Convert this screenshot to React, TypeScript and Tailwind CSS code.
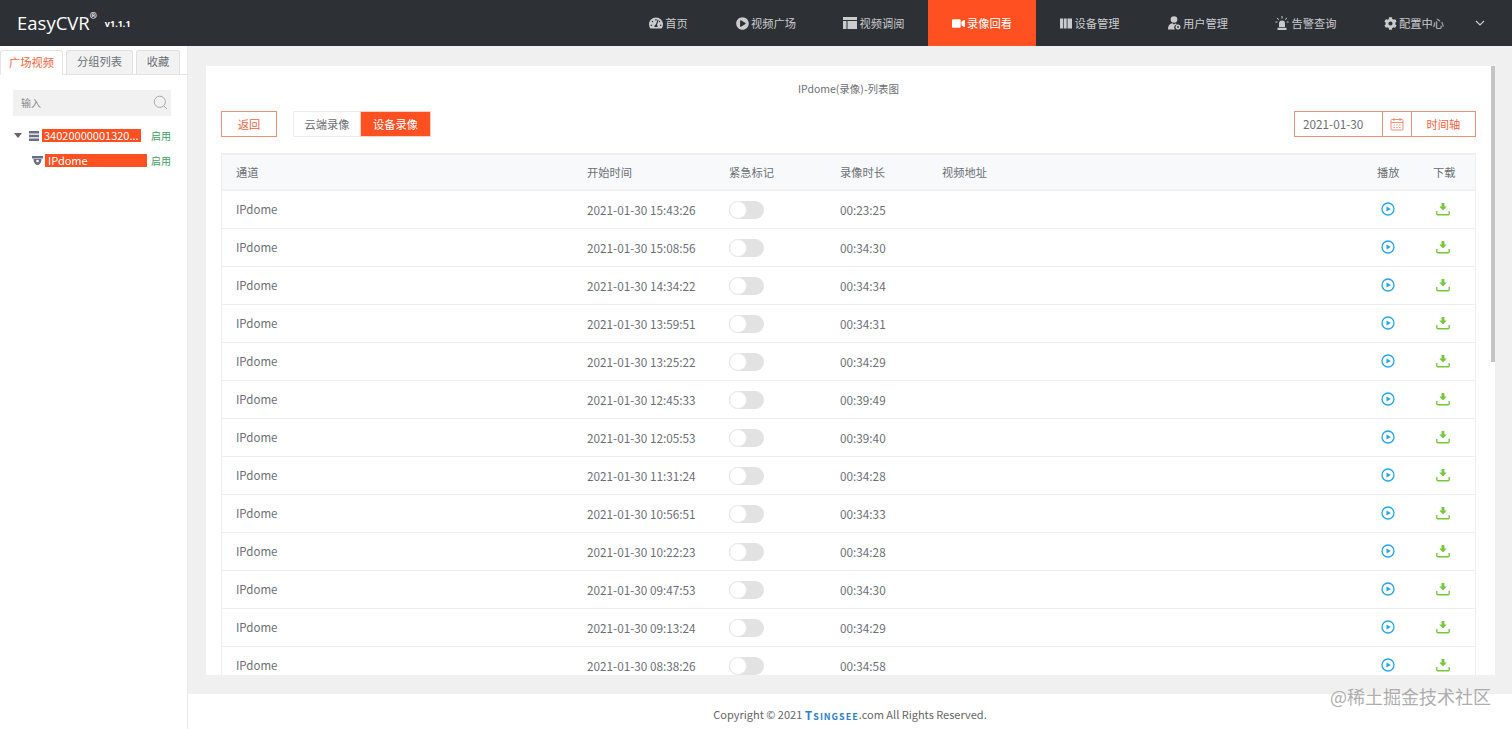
import React from 'react';
import { FaCog, FaPlayCircle, FaTachometerAlt, FaVideo } from 'react-icons/fa';

const rows = [
    ['2021-01-30 15:43:26', '00:23:25'],
    ['2021-01-30 15:08:56', '00:34:30'],
    ['2021-01-30 14:34:22', '00:34:34'],
    ['2021-01-30 13:59:51', '00:34:31'],
    ['2021-01-30 13:25:22', '00:34:29'],
    ['2021-01-30 12:45:33', '00:39:49'],
    ['2021-01-30 12:05:53', '00:39:40'],
    ['2021-01-30 11:31:24', '00:34:28'],
    ['2021-01-30 10:56:51', '00:34:33'],
    ['2021-01-30 10:22:23', '00:34:28'],
    ['2021-01-30 09:47:53', '00:34:30'],
    ['2021-01-30 09:13:24', '00:34:29'],
    ['2021-01-30 08:38:26', '00:34:58'],
];

const TableIcon = () => (
    <svg className="w-[14px] h-[14px]" viewBox="0 0 14 14" fill="currentColor">
        <path d="M0 1h14v3H0zM0 5h3.5v8H0zM4.5 5H14v8H4.5z" />
    </svg>
);

const BooksIcon = () => (
    <svg className="w-[12px] h-[11px]" viewBox="0 0 12 11" fill="currentColor">
        <path d="M0 .5h3v10H0zM3.700 .5h3v10h-3zM7.500 .5H12v10H7.500z" />
    </svg>
);

const UserIcon = () => (
    <svg className="w-[13px] h-[14px]" viewBox="0 0 13 14" fill="currentColor">
        <circle cx="6" cy="3.5" r="3.3" />
        <path d="M0 13.5c0-4 2-6 4.500-6.200L6 8.500l1.200-1C8 7.700 8.600 8 9 8.400a3 3 0 0 0-2 5.100z" />
        <circle cx="10" cy="11" r="2.500" />
        <circle cx="10" cy="11" r=".9" fill="#2d3034" />
    </svg>
);

const SirenIcon = () => (
    <svg className="w-[14px] h-[14px]" viewBox="0 0 14 14" fill="currentColor">
        <path d="M4 11V7.500a3 3 0 0 1 6 0V11zM2.500 11.800h9V14h-9z" />
        <path d="M7 0v2.600M2.200 1.800l1.400 2M11.800 1.800l-1.400 2M.4 6h2M11.600 6h2" stroke="currentColor" strokeWidth="1" />
    </svg>
);

const PlayIcon = () => (
    <svg className="w-[14px] h-[14px] -mt-[2px]" viewBox="0 0 14 14">
        <circle cx="7" cy="7" r="6" fill="none" stroke="#1fa6ea" strokeWidth="1.300" />
        <path d="M5.500 4.400 9.800 7l-4.300 2.600z" fill="#1fa6ea" />
    </svg>
);

const DownloadIcon = () => (
    <svg className="w-[14px] h-[14px] -mt-[2px]" viewBox="0 0 14 14" fill="none">
        <path d="M5.600 1h2.800v3.600h2.300L7 8.400 3.300 4.600h2.300z" fill="#72c93a" />
        <path d="M.8 9v2.600c0 .8.500 1.200 1.200 1.200h10c.7 0 1.200-.4 1.200-1.200V9" stroke="#72c93a" strokeWidth="1.400" />
    </svg>
);

const CalendarIcon = () => (
    <svg className="w-[14px] h-[14px]" viewBox="0 0 14 14" fill="none" stroke="#ef8f76">
        <rect x="1" y="2.500" width="12" height="10.500" rx="1" />
        <path d="M1 5.500h12M4 1v3M10 1v3" />
        <path d="M3.500 8h7M3.500 10.500h7" strokeDasharray="1.400 1.400" />
    </svg>
);

const navItems = [
    { label: '首页', icon: <FaTachometerAlt className="w-[14px] h-[14px]" /> },
    { label: '视频广场', icon: <FaPlayCircle className="w-[13px] h-[13px]" /> },
    { label: '视频调阅', icon: <TableIcon /> },
    { label: '录像回看', icon: <FaVideo className="w-[13px] h-[13px]" />, active: true },
    { label: '设备管理', icon: <BooksIcon /> },
    { label: '用户管理', icon: <UserIcon /> },
    { label: '告警查询', icon: <SirenIcon /> },
    { label: '配置中心', icon: <FaCog className="w-[13px] h-[13px]" /> },
];

const Toggle = () => (
    <div className="w-[35px] h-[18px] rounded-full bg-[#e2e2e2] flex items-center">
        <div className="w-[18px] h-[18px] rounded-full bg-white border border-[#e8e8e8]" />
    </div>
);

const App: React.FC = () => {
    return (
        <div className="relative h-screen flex flex-col overflow-hidden bg-white text-[11.25px] text-[#6b6f75] font-['Noto_Sans_CJK_SC','Noto_Sans_CJK_JP',sans-serif]">
            {/* top nav */}
            <header className="h-[46px] shrink-0 bg-[#2d3034] flex items-stretch justify-between pl-[17px] pr-[20px]">
                <div className="flex items-center text-white">
                    <span className="text-[18.5px] font-['Open_Sans',sans-serif]">EasyCVR</span>
                    <span className="text-[15px] mb-[12px] leading-none">®</span>
                    <span className="ml-[8px] mt-[2px] text-[9px] font-bold font-['Open_Sans',sans-serif]">v1.1.1</span>
                </div>
                <nav className="flex items-stretch text-[#c9cbcd]">
                    {navItems.map(item => (
                        <div
                            key={item.label}
                            className={`w-[108px] first:w-[87px] flex items-center justify-center gap-[2px] ${item.active ? 'bg-[#ff5022] text-white' : ''}`}
                        >
                            {item.icon}
                            <span className="text-[11.25px]">{item.label}</span>
                        </div>
                    ))}
                    <div className="flex items-center justify-center w-[24px]">
                        <svg className="w-[10px] h-[6px]" viewBox="0 0 10 6" fill="none" stroke="currentColor" strokeWidth="1.200">
                            <path d="M1 1l4 4 4-4" />
                        </svg>
                    </div>
                </nav>
            </header>

            <div className="flex-1 flex min-h-0">
                {/* left tree */}
                <aside className="w-[188px] shrink-0 border-r border-[#e8e8e8] bg-white">
                    <div className="h-[29px] pt-[4px] flex items-end border-b border-[#e4e4e4]">
                        <div className="w-[63px] h-[25px] -mb-px pb-[2px] bg-white border border-b-0 border-[#e4e4e4] rounded-t-[3px] flex items-center justify-center text-[#f4633c]">广场视频</div>
                        <div className="ml-[3px] w-[67px] h-[24px] pb-[2px] bg-[#f2f2f2] border border-b-0 border-[#e0e0e0] rounded-t-[3px] flex items-center justify-center">分组列表</div>
                        <div className="ml-[3px] w-[44px] h-[24px] pb-[2px] bg-[#f2f2f2] border border-b-0 border-[#e0e0e0] rounded-t-[3px] flex items-center justify-center">收藏</div>
                    </div>
                    <div className="mt-[15px] mx-[13px] w-[158px] h-[26px] pb-[2px] bg-[#f1f1f1] flex items-center justify-between pl-[8px] pr-[3px] text-[10px] text-[#888]">
                        <span>输入</span>
                        <svg className="w-[15px] h-[15px]" viewBox="0 0 15 15" fill="none" stroke="#aaa">
                            <circle cx="6.800" cy="6.800" r="5.600" />
                            <path d="M11 11l3 3" />
                        </svg>
                    </div>
                    <div className="mt-[7px] h-[25px] flex items-center pl-[14px]">
                        <span className="w-0 h-0 border-x-[4px] border-x-transparent border-t-[5px] border-t-[#666]" />
                        <svg className="ml-[7px] w-[10px] h-[10px]" viewBox="0 0 10 10" fill="#6a6f85">
                            <path d="M0 0h10v2.500H0zM0 3.700h10v2.600H0zM0 7.500h10V10H0z" />
                        </svg>
                        <span className="ml-[3px] w-[99px] h-[13px] bg-[#ff5022] text-white text-[11px] leading-[13px] pl-[2px] whitespace-nowrap">34020000001320...</span>
                        <span className="ml-[10px] text-[10px] text-[#3f9f5f]">启用</span>
                    </div>
                    <div className="h-[25px] flex items-center pl-[32px]">
                        <svg className="w-[11px] h-[10px]" viewBox="0 0 11 10" fill="#6a6f85">
                            <path d="M0 0h11v2.500H0z" />
                            <path d="M1.500 3h8c0 3.500-1.800 6-4 6s-4-2.500-4-6z" />
                            <circle cx="5.500" cy="5" r="1.300" fill="#fff" />
                        </svg>
                        <span className="ml-[2px] w-[102px] h-[13px] bg-[#ff5022] text-white text-[11px] leading-[13px] pl-[3px]">IPdome</span>
                        <span className="ml-[4px] text-[10px] text-[#3f9f5f]">启用</span>
                    </div>
                </aside>

                <div className="flex-1 min-w-0 flex flex-col">
                    {/* card */}
                    <main className="flex-1 min-h-0 bg-[#f0f0f0] pt-[20px] pl-[18px] pr-[17px] pb-[19px] flex">
                        <div className="flex-1 min-w-0 bg-white flex overflow-hidden">
                            <div className="flex-1 min-w-0 pl-[15px] pr-[15px] overflow-hidden">
                                <div className="h-[45px] flex items-center justify-center text-[10.5px]">IPdome(录像)-列表图</div>
                                <div className="h-[26px] flex items-stretch justify-between">
                                    <div className="flex items-stretch">
                                        <div className="w-[56px] border border-[#ef8f76] flex items-center justify-center text-[#f4633c]">返回</div>
                                        <div className="ml-[16px] w-[68px] border border-[#ececec] flex items-center justify-center">云端录像</div>
                                        <div className="w-[71px] -ml-px bg-[#ff5022] border border-[#ffd2c4] flex items-center justify-center text-white">设备录像</div>
                                    </div>
                                    <div className="flex items-stretch w-[182px] border border-[#ef8f76]">
                                        <div className="w-[87px] pl-[8px] flex items-center text-[11.75px]">2021-01-30</div>
                                        <div className="w-[30px] border-x border-[#ef8f76] flex items-center justify-center">
                                            <CalendarIcon />
                                        </div>
                                        <div className="flex-1 flex items-center justify-center text-[#f4633c]">时间轴</div>
                                    </div>
                                </div>
                                {/* records */}
                                <div className="mt-[16px] border-x border-t-2 border-[#eeeeee]">
                                    <div className="h-[36px] bg-[#f8f9fa] border-b-2 border-[#f1f1f1] flex items-center">
                                        <div className="w-[365px] pl-[14px]">通道</div>
                                        <div className="w-[142px]">开始时间</div>
                                        <div className="w-[111px]">紧急标记</div>
                                        <div className="w-[102px]">录像时长</div>
                                        <div className="flex-1">视频地址</div>
                                        <div className="w-[56px]">播放</div>
                                        <div className="w-[42px]">下载</div>
                                    </div>
                                    {rows.map(([start, duration]) => (
                                        <div key={start} className="h-[38px] border-b border-[#eeeeee] flex items-center">
                                            <div className="w-[365px] pl-[14px] text-[11.5px]">IPdome</div>
                                            <div className="w-[142px] text-[11.75px]">{start}</div>
                                            <div className="w-[111px]"><Toggle /></div>
                                            <div className="w-[102px] text-[11.75px]">{duration}</div>
                                            <div className="flex-1" />
                                            <div className="w-[56px] pl-[4px]"><PlayIcon /></div>
                                            <div className="w-[42px] pl-[3px]"><DownloadIcon /></div>
                                        </div>
                                    ))}
                                </div>
                            </div>
                            <div className="w-[4px] shrink-0 bg-white">
                                <div className="h-[296px] bg-[#c4c4c4]" />
                            </div>
                        </div>
                    </main>
                    <footer className="h-[35px] shrink-0 pt-[6px] bg-white flex items-center justify-center text-[11px] text-[#666]">
                        <span>Copyright © 2021&nbsp;</span>
                        <span className="font-bold text-[#2f7fd0] text-[9px] tracking-[1px]">
                            <span className="text-[12px]">T</span>SINGSEE
                        </span>
                        <span>.com All Rights Reserved.</span>
                    </footer>
                </div>
            </div>

            {/* site watermark */}
            <div className="absolute right-[21px] bottom-[21px] text-[18px] leading-[24px] text-[#9a9a9a] opacity-80">@稀土掘金技术社区</div>
        </div>
    );
};

export default App;
